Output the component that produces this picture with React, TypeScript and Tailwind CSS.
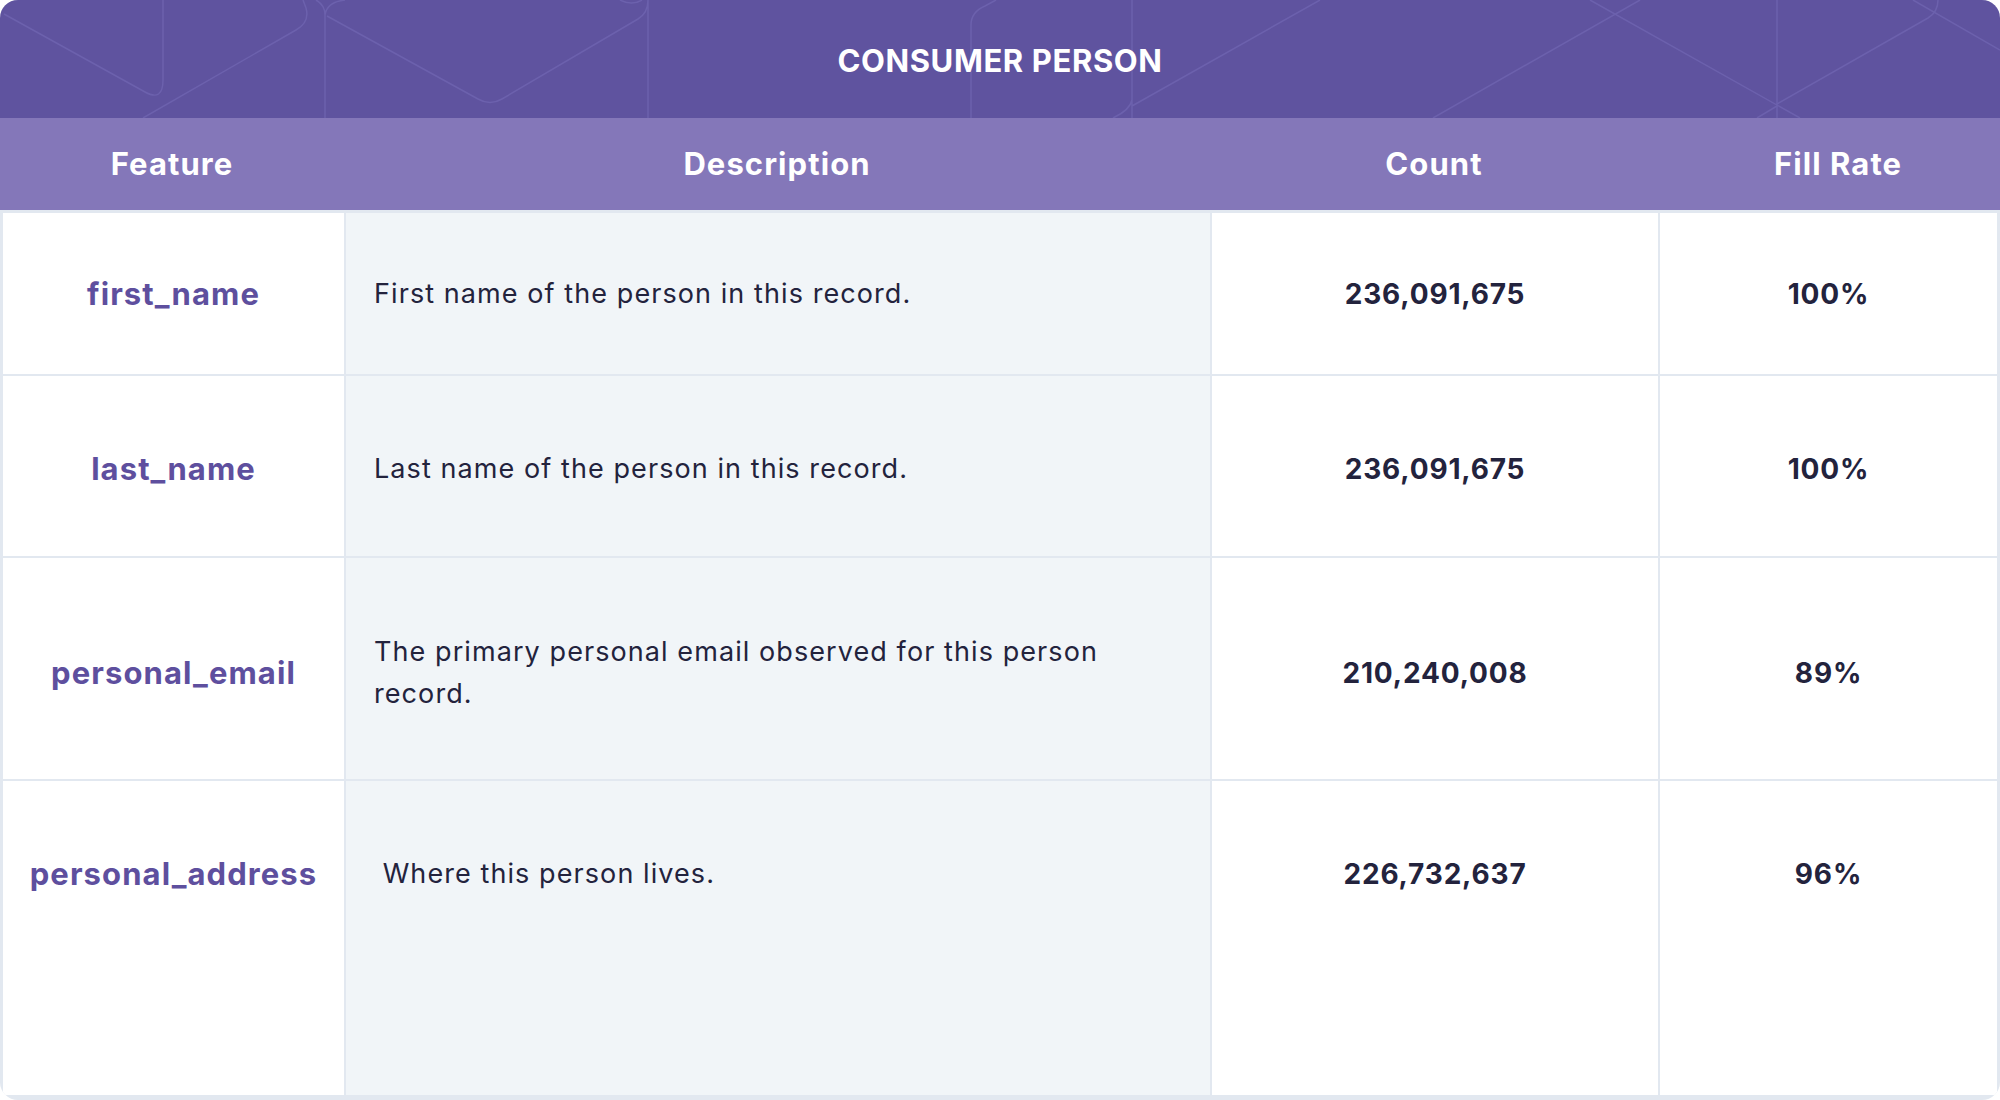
const rows = [
  {
    feature: "first_name",
    description: "First name of the person in this record.",
    count: "236,091,675",
    fill: "100%",
    align: "items-center",
  },
  {
    feature: "last_name",
    description: "Last name of the person in this record.",
    count: "236,091,675",
    fill: "100%",
    align: "items-center pt-[6px]",
  },
  {
    feature: "personal_email",
    description: "The primary personal email observed for this person record.",
    count: "210,240,008",
    fill: "89%",
    align: "items-center pt-[8px]",
  },
  {
    feature: "personal_address",
    description: "\u00a0Where this person lives.",
    count: "226,732,637",
    fill: "96%",
    align: "items-start pt-[72px]",
  },
];

function HeaderPattern() {
  return (
    <svg
      className="absolute inset-0 h-full w-full"
      viewBox="0 0 2000 118"
      preserveAspectRatio="none"
      fill="none"
      stroke="#6c61ad"
      strokeWidth="1.5"
    >
      <path d="M4 14 L145 92 Q163 102 163 80 L163 0" />
      <path d="M143 118 L296 30 Q310 22 306 8 L303 0" />
      <path d="M316 0 Q325 5 325 15 L325 118 M325 15 Q327 2 345 0" />
      <path d="M327 16 L478 99 Q490 106 502 99 L638 19 Q648 13 648 0 L648 118" />
      <path d="M620 0 Q632 6 642 0" />
      <path d="M971 118 L971 25 Q971 12 985 6 L996 0" />
      <path d="M1132 0 L1132 118 M1113 118 Q1130 110 1132 100 M1132 106 L1320 0" />
      <path d="M1433 118 L1640 0" />
      <path d="M1590 0 L1800 118 M1777 0 L1777 118" />
      <path d="M1777 104 L1928 18 Q1938 12 1938 0" />
      <path d="M1757 118 L1777 106" />
      <path d="M1913 0 L2000 50" />
    </svg>
  );
}

export default function App() {
  return (
    <div className="h-[1100px] w-[2000px] bg-white font-['Inter',sans-serif]">
      <div className="flex h-full w-full flex-col overflow-hidden rounded-[18px] bg-[#e2e8f0]">
        <div className="relative flex h-[118px] shrink-0 items-center justify-center bg-[#5f539f] pt-[5px]">
          <HeaderPattern />
          <h1 className="relative text-[31px] font-bold tracking-[0.02em] text-white">
            CONSUMER PERSON
          </h1>
        </div>

        <div className="grid h-[92px] shrink-0 grid-cols-[344px_866px_448px_342px] items-center bg-[#8477b9] text-[31px] font-bold tracking-[0.035em] text-white">
          <div className="text-center">Feature</div>
          <div className="text-center">Description</div>
          <div className="text-center">Count</div>
          <div className="pl-[18px] text-center">Fill Rate</div>
        </div>

        <div className="grid flex-1 grid-cols-[341px_864px_446px_337px] grid-rows-[161px_180px_221px_1fr] gap-[2px] px-[3px] pb-[5px] pt-[3px]">
          {rows.map((row) => [
            <div
              key={row.feature + "-f"}
              className={`flex justify-center bg-white ${row.align}`}
            >
              <span className="text-[31px] leading-[42px] font-bold tracking-[0.035em] text-[#5e4f9e]">
                {row.feature}
              </span>
            </div>,
            <div
              key={row.feature + "-d"}
              className={`flex bg-[#f1f5f8] px-7 ${row.align}`}
            >
              <p className="max-w-[790px] text-[27px] leading-[42px] tracking-[0.04em] text-[#23233d]">
                {row.description}
              </p>
            </div>,
            <div
              key={row.feature + "-c"}
              className={`flex justify-center bg-white ${row.align}`}
            >
              <span className="text-[28px] leading-[42px] font-bold tracking-[0.03em] text-[#23233d]">
                {row.count}
              </span>
            </div>,
            <div
              key={row.feature + "-r"}
              className={`flex justify-center bg-white ${row.align}`}
            >
              <span className="text-[28px] leading-[42px] font-bold tracking-[0.03em] text-[#23233d]">
                {row.fill}
              </span>
            </div>,
          ])}
        </div>
      </div>
    </div>
  );
}
